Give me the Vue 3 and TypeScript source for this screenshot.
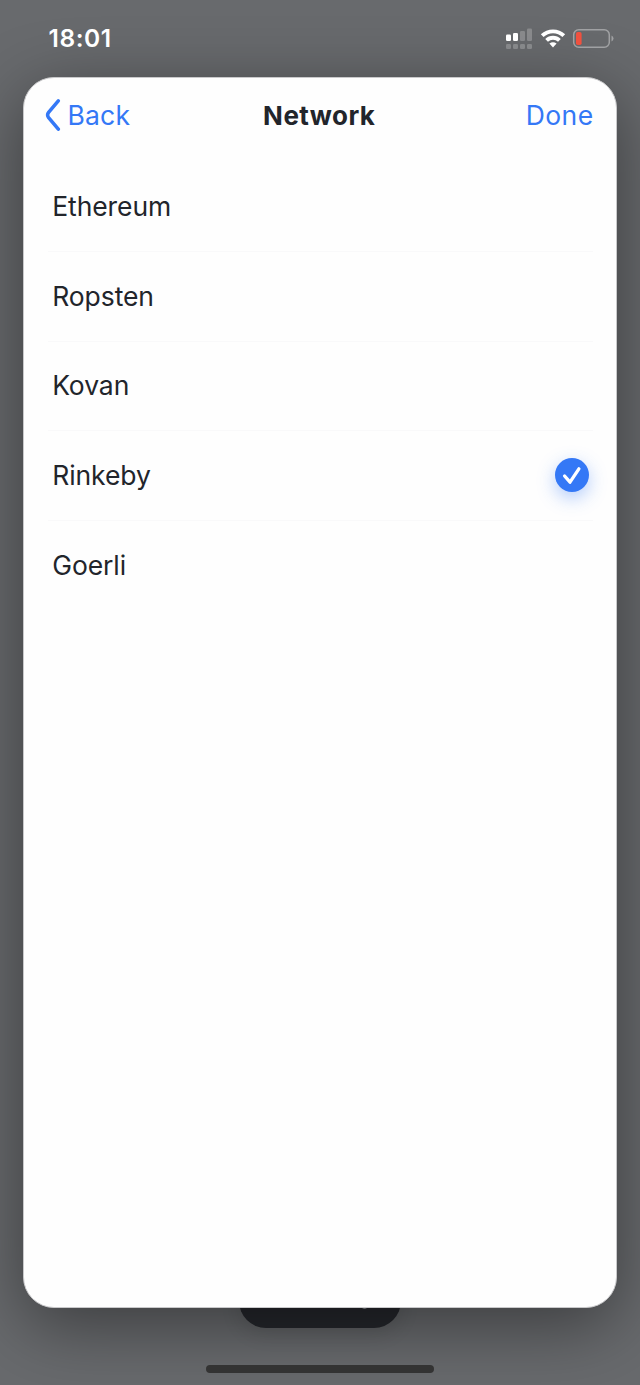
<script setup lang="ts">
import { ref } from 'vue'

const networks: string[] = ['Ethereum', 'Ropsten', 'Kovan', 'Rinkeby', 'Goerli']
const selected = ref<string>('Rinkeby')
</script>

<template>
  <div class="screen">
    <header class="status">
      <span class="time">18:01</span>
      <svg class="indicators" width="110" height="24" viewBox="0 0 110 24">
        <g fill="#fff">
          <rect x="2" y="7.5" width="5" height="6.5" rx="1.3" />
          <rect x="9" y="6" width="5" height="8" rx="1.3" />
          <g opacity=".22">
            <rect x="16" y="4" width="5" height="10" rx="1.3" />
            <rect x="23" y="1.5" width="5" height="12.5" rx="1.3" />
            <rect x="2" y="17" width="5" height="5" rx="1.3" />
            <rect x="9" y="17" width="5" height="5" rx="1.3" />
            <rect x="16" y="17" width="5" height="5" rx="1.3" />
            <rect x="23" y="17" width="5" height="5" rx="1.3" />
          </g>
        </g>
        <g fill="none" stroke="#fff" stroke-width="3.9">
          <path d="M38.2 8.7a15.6 15.6 0 0 1 21.6 0" />
          <path d="M42.6 13.4a9.2 9.2 0 0 1 12.8 0" />
        </g>
        <path d="M45.4 16.6q3.6-2.8 7.2 0L49 20.4Z" fill="#fff" />
        <rect x="69.7" y="2.7" width="35.6" height="17.6" rx="5" fill="none" stroke="#a0a1a3" stroke-width="1.5" />
        <rect x="72" y="5" width="5.6" height="13" rx="1.8" fill="#f0513f" />
        <path d="M107.5 8.5q2 1 2 3t-2 3Z" fill="#a0a1a3" />
      </svg>
    </header>

    <main class="sheet">
      <nav class="bar">
        <button class="action back">
          <svg width="16" height="34" viewBox="0 0 16 34">
            <path d="M13.3 2.8 3.6 14.4q-2 2.6 0 5.2l9.7 11.6" fill="none" stroke="#3478f6" stroke-width="3.5" stroke-linecap="round" />
          </svg>
          <span>Back</span>
        </button>
        <h1 class="title">Network</h1>
        <button class="action done">Done</button>
      </nav>
      <ul class="list">
        <li v-for="network in networks" :key="network" class="row" @click="selected = network">
          <span>{{ network }}</span>
          <span v-if="network === selected" class="check">
            <svg width="34" height="34" viewBox="0 0 34 34">
              <path d="m9.6 18 5.4 6.2 8.9-13.4" fill="none" stroke="#fff" stroke-width="3.3" stroke-linecap="round" stroke-linejoin="round" />
            </svg>
          </span>
        </li>
      </ul>
    </main>

    <footer class="bottom">
      <div class="pill"><i class="speck"></i></div>
      <div class="home"></div>
    </footer>
  </div>
</template>

<style>
body {
  margin: 0;
  background: #67696c;
}
</style>

<style scoped>
.screen {
  display: flex;
  flex-direction: column;
  width: 640px;
  height: 1385px;
  overflow: hidden;
  background: #686a6d;
  font-family: Inter, "Liberation Sans", sans-serif;
  color: #22252b;
}
.status {
  position: relative;
  z-index: 3;
  flex: none;
  box-sizing: border-box;
  display: flex;
  justify-content: space-between;
  height: 77px;
  padding: 23px 26px 0 48.5px;
}
.time {
  color: #fff;
  font-size: 24.5px;
  line-height: 30px;
  font-weight: 600;
  letter-spacing: .55px;
}
.indicators {
  margin-top: 4px;
}
.sheet {
  position: relative;
  z-index: 2;
  flex: none;
  box-sizing: border-box;
  width: 594px;
  height: 1231px;
  margin-left: 23px;
  border: 1px solid #c9c9cb;
  border-radius: 31px;
  background: #fefefe;
  box-shadow: 0 17px 70px rgba(0, 0, 0, .44);
}
.bar {
  display: grid;
  grid-template-columns: 1fr auto 1fr;
  align-items: center;
  height: 75px;
  padding: 0 22.5px 0 21px;
}
.action {
  display: flex;
  align-items: center;
  padding: 0 0 2px;
  border: 0;
  background: none;
  color: #3478f6;
  font: 400 26.5px/34px Inter, "Liberation Sans", sans-serif;
  letter-spacing: .4px;
}
.back {
  justify-self: start;
  gap: 6.5px;
  letter-spacing: .2px;
}
.done {
  justify-self: end;
}
.title {
  margin: 0;
  font-size: 26px;
  line-height: 34px;
  font-weight: 700;
  letter-spacing: .45px;
}
.list {
  margin: 9.4px 23.5px 0;
  padding: 0;
  list-style: none;
}
.row {
  box-sizing: border-box;
  display: flex;
  align-items: center;
  justify-content: space-between;
  height: 89.6px;
  padding: 0 3.5px 1px 4.7px;
  border-bottom: 1px solid #f9f9fa;
  font-size: 26.5px;
  line-height: 34px;
  letter-spacing: -.08px;
}
.row:last-child {
  border-bottom-color: transparent;
}
.check {
  display: block;
  width: 34px;
  height: 34px;
  border-radius: 50%;
  background: #3478f6;
  box-shadow: 0 6px 18px rgba(52, 120, 246, .38);
}
.check svg {
  display: block;
}
.bottom {
  display: flex;
  flex-direction: column;
  align-items: center;
  height: 77px;
}
.pill {
  position: relative;
  z-index: 1;
  flex: none;
  width: 162px;
  height: 54px;
  margin-top: -34px;
  border-radius: 27px;
  background: #25272c;
  box-shadow: 0 6px 20px rgba(0, 0, 0, .12);
}
.speck {
  position: absolute;
  left: 123px;
  top: 30px;
  width: 5px;
  height: 5px;
  border-radius: 50%;
  background: #85878b;
}
.home {
  position: relative;
  z-index: 3;
  width: 228px;
  height: 8px;
  margin-top: 37px;
  border-radius: 4px;
  background: #333;
}
</style>
